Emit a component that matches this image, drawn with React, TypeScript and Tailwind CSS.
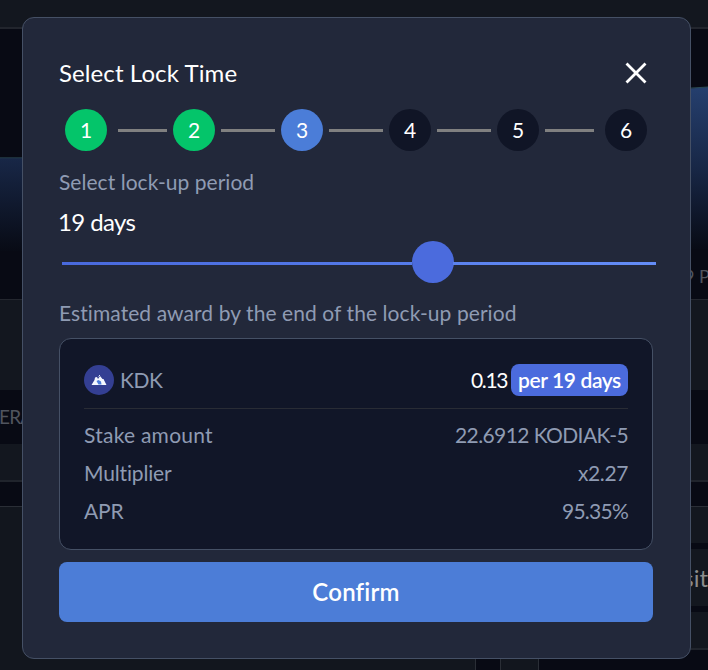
import React from "react";

const steps = [
  { n: 1, color: "bg-[#04c56a]" },
  { n: 2, color: "bg-[#04c56a]" },
  { n: 3, color: "bg-[#4b7dd8]" },
  { n: 4, color: "bg-[#101526]" },
  { n: 5, color: "bg-[#101526]" },
  { n: 6, color: "bg-[#101526]" },
];

const connectors = [
  "ml-[11px] w-[49px] mr-[6px]",
  "mx-[6px] w-[54px]",
  "mx-[6px] w-[54px]",
  "mx-[6px] w-[54px]",
  "ml-[6px] w-[49px] mr-[11px]",
];

const rows = [
  { label: "Stake amount", value: "22.6912 KODIAK-5", lt: "tracking-[0.25px]", vt: "tracking-[-0.6px]" },
  { label: "Multiplier", value: "x2.27", lt: "tracking-[-0.15px]", vt: "tracking-[-0.4px]" },
  { label: "APR", value: "95.35%", lt: "tracking-[-0.2px]", vt: "tracking-[-0.75px]" },
];

function Backdrop() {
  return (
    <div className="flex h-full w-full flex-col bg-[#080a14]">
      <div className="h-[29px] shrink-0 border-b-2 border-[#22252d] bg-[#13171f]" />
      <div className="flex h-[270px] shrink-0 justify-between">
        <svg width="22" height="270" viewBox="0 0 22 270">
          <defs>
            <linearGradient id="areaLeft" x1="0" y1="0" x2="0" y2="1">
              <stop offset="0" stopColor="#182747" />
              <stop offset="1" stopColor="#080b15" />
            </linearGradient>
          </defs>
          <path d="M0 129H22V222H0Z" fill="url(#areaLeft)" />
          <path d="M0 128.800H22" stroke="#263f4b" />
        </svg>
        <div className="flex w-[24px] flex-col">
          <svg width="24" height="230" viewBox="0 0 24 230">
            <defs>
              <linearGradient id="areaRight" x1="0" y1="0" x2="0" y2="1">
                <stop offset="0" stopColor="#253f6e" />
                <stop offset="0.5" stopColor="#182746" />
                <stop offset="1" stopColor="#080b15" />
              </linearGradient>
            </defs>
            <path d="M0 60L24 58V220H0Z" fill="url(#areaRight)" />
            <path d="M0 59.500L24 58" stroke="#2b4b55" />
          </svg>
          <span className="mt-[5px] whitespace-nowrap text-[18px] leading-[24px] text-[#50545e]">9 P</span>
        </div>
      </div>
      <div className="h-[91px] shrink-0 border-t border-[#24272f] bg-[#13171f]" />
      <div className="flex h-[54px] shrink-0 items-center text-[19px] tracking-[-0.8px] text-[#50545e]">
        <span className="-ml-px">ERAGE</span>
      </div>
      <div className="h-[38px] shrink-0 border-b-2 border-[#20242c] bg-[#13171f]" />
      <div className="h-6 shrink-0" />
      <div className="flex h-[164px] shrink-0">
        <div className="w-[476px] border-t border-r border-[#2a2e36] bg-[#12161e]" />
        <div className="w-6" />
        <div className="w-[39px] border-x border-[#2a2e36] bg-[#12161e]" />
        <div className="flex flex-1 flex-col gap-[6px] border-t border-[#2a2e36]">
          <div className="h-[36px] bg-[#13171f]" />
          <div className="flex h-[57px] items-center justify-end bg-[#13171f] text-[24px] text-[#8c8c8c]">Deposit</div>
          <div className="h-[38px] border-b-2 border-[#20242c] bg-[#13171f]" />
        </div>
      </div>
    </div>
  );
}

function Token() {
  return (
    <svg className="block" width="30" height="30" viewBox="0 0 30 30">
      <circle cx="15" cy="15" r="15" fill="#343f93" />
      <path d="M7.500 20L10.500 15L11 12.500L13 12L14 14L16 11L18.500 14L19.500 14L22.500 20Z" fill="#f5f8ff" />
      <path d="M12.500 16L14.500 15L17 16.500L17.500 19.500H14.500Z" fill="#4c7ddb" />
      <path d="M14.500 11.500L16 10" stroke="#dce7ff" />
    </svg>
  );
}

export default function App() {
  return (
    <div className="relative h-[670px] w-[708px] overflow-hidden font-['Lato',sans-serif]">
      <Backdrop />
      <main className="absolute left-[22px] top-[17px] flex h-[642px] w-[669px] flex-col rounded-xl border border-[#455065] bg-[#22283a] px-9 pt-[35px]">
        <header className="flex h-[40px] items-center justify-between pr-[7px]">
          <h1 className="text-[24px] leading-[40px] tracking-[0.1px] text-white">Select Lock Time</h1>
          <svg width="22" height="22" viewBox="0 0 22 22" fill="none" stroke="white" strokeWidth="2.800" strokeLinecap="square">
            <path d="M2.500 2.500L19.500 19.500M19.500 2.500L2.500 19.500" />
          </svg>
        </header>
        <div className="mt-4 flex h-[42px] items-center pl-[6px]">
          {steps.map((s, i) => (
            <React.Fragment key={s.n}>
              <div className={`flex size-[42px] shrink-0 items-center justify-center rounded-full text-[21px] text-white ${s.color}`}>{s.n}</div>
              {i < 5 && <div className={`h-[3px] shrink-0 bg-[#808080] ${connectors[i]}`} />}
            </React.Fragment>
          ))}
        </div>
        <p className="mt-4 text-[21px] leading-[30px] tracking-[0.04px] text-[#8f9bb3]">Select lock-up period</p>
        <p className="-ml-px mt-[10px] text-[24px] leading-[30px] tracking-[-0.6px] text-white">19 days</p>
        <div className="mt-[3.500px] flex h-[42px] items-center pl-[3px]">
          <div className="mt-[3px] h-[3px] w-[350px] shrink-0 bg-linear-to-r from-[#4969dc] to-[#557be9]" />
          <div className="-mx-[0.500px] size-[42px] shrink-0 rounded-full bg-[#4b6bdd]" />
          <div className="mt-[3px] h-[3px] w-[203px] shrink-0 bg-linear-to-r from-[#5b82ee] to-[#648df7]" />
        </div>
        <p className="mt-[15.500px] text-[21px] leading-[30px] tracking-[0.075px] text-[#8f9bb3]">Estimated award by the end of the lock-up period</p>
        <section className="mt-[10px] h-[212px] w-[594px] rounded-xl border border-[#455065] bg-[#111628] px-6 pt-6">
          <div className="flex h-[46px] items-start justify-between border-b border-[#292c35]">
            <div className="mt-[2px] flex items-center gap-[6px] text-[21px] leading-[30px] tracking-[-0.5px] text-[#8f9bb3]">
              <Token />
              <span>KDK</span>
            </div>
            <div className="mt-px flex items-center gap-1 text-[21px] leading-[32px] text-white">
              <span className="tracking-[-1.4px]">0.13</span>
              <span className="flex h-[32px] w-[117px] items-center justify-center rounded-lg bg-[#4b6bdd] font-semibold tracking-[-0.4px]">per 19 days</span>
            </div>
          </div>
          <div className="mt-[7px]">
            {rows.map((r) => (
              <div key={r.label} className="flex h-[38px] items-center justify-between text-[21px] text-[#8f9bb3]">
                <span className={r.lt}>{r.label}</span>
                <span className={r.vt}>{r.value}</span>
              </div>
            ))}
          </div>
        </section>
        <button className="mt-3 h-[60px] w-[594px] rounded-lg bg-[#4c7dd7] text-[24px] font-semibold tracking-[0.2px] text-white">Confirm</button>
      </main>
    </div>
  );
}
